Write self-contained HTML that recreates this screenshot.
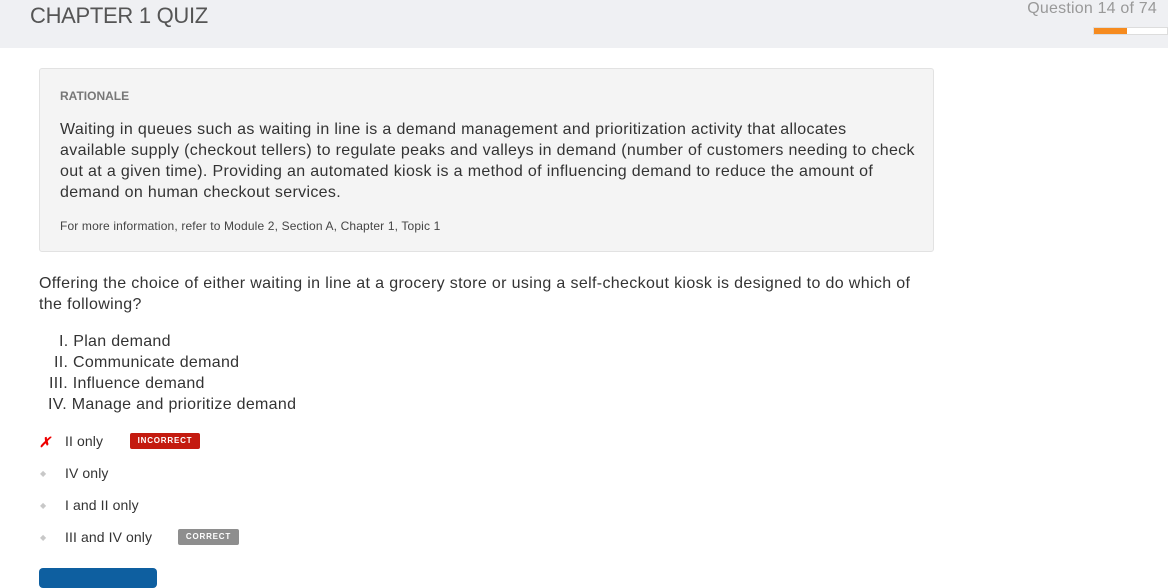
<!DOCTYPE html>
<html><head><meta charset="utf-8"><style>
body{margin:0;width:1168px;height:574px;overflow:hidden;background:#fff;font-family:"Liberation Sans",Arial,sans-serif;color:#333;}
.hdr{position:absolute;left:0;top:0;width:1168px;height:48px;background:#eff0f3;}
.title{position:absolute;left:30px;top:3px;font-size:22px;color:#555;letter-spacing:-0.3px}
.qn{position:absolute;right:11px;top:0;font-size:16px;color:#999;letter-spacing:0.2px}
.bar{position:absolute;left:1093px;top:27px;width:75px;height:8px;background:#fff;border:1px solid #ddd;box-sizing:border-box}
.bar div{width:33px;height:6px;background:#f68b1f}
.box{position:absolute;left:39px;top:68px;width:895px;height:184px;background:#f4f4f4;border:1px solid #e2e2e2;border-radius:3px;box-sizing:border-box}
.rat{position:absolute;left:20px;top:20px;font-size:12px;font-weight:bold;color:#777}
.rtxt{position:absolute;left:20px;top:50px;font-size:16px;line-height:21px;white-space:nowrap;letter-spacing:0.34px;color:#333}
.more{position:absolute;left:20px;top:150px;font-size:12px;color:#444;letter-spacing:0.15px}
.q{position:absolute;left:39px;top:273px;font-size:16px;line-height:21px;white-space:nowrap;letter-spacing:0.35px}
.list{position:absolute;top:331px;font-size:16px;line-height:21px;letter-spacing:0.3px}
.opt{position:absolute;left:65px;font-size:14px;color:#333;letter-spacing:0.1px}
.mk{position:absolute;left:40px;font-size:8px;color:#c8c8c8}
.badge{position:absolute;font-size:8px;font-weight:bold;color:#fff;letter-spacing:0.8px;text-align:center;line-height:16px;height:16px;border-radius:2px}
.btn{position:absolute;left:39px;top:568px;width:118px;height:20px;background:#0e5fa0;border-radius:4px}
</style></head><body>
<div class="hdr"><div class="title">CHAPTER 1 QUIZ</div><div class="qn">Question 14 of 74</div><div class="bar"><div></div></div></div>
<div class="box">
<div class="rat">RATIONALE</div>
<div class="rtxt">Waiting in queues such as waiting in line is a demand management and prioritization activity that allocates<br>available supply (checkout tellers) to regulate peaks and valleys in demand (number of customers needing to check<br>out at a given time). Providing an automated kiosk is a method of influencing demand to reduce the amount of<br>demand on human checkout services.</div>
<div class="more">For more information, refer to Module 2, Section A, Chapter 1, Topic 1</div>
</div>
<div class="q">Offering the choice of either waiting in line at a grocery store or using a self-checkout kiosk is designed to do which of<br>the following?</div>
<div class="list" style="left:59px">I. Plan demand</div>
<div class="list" style="left:54px;top:352px">II. Communicate demand</div>
<div class="list" style="left:49px;top:373px">III. Influence demand</div>
<div class="list" style="left:48px;top:394px">IV. Manage and prioritize demand</div>
<div class="mk" style="top:434px;left:39px;color:#e00;font-size:14px;font-style:italic;font-weight:bold">✗</div>
<div class="opt" style="top:433px">II only</div>
<div class="badge" style="left:130px;top:433px;width:70px;background:#c41a0f">INCORRECT</div>
<div class="mk" style="top:469px">◆</div><div class="opt" style="top:465px">IV only</div>
<div class="mk" style="top:501px">◆</div><div class="opt" style="top:497px">I and II only</div>
<div class="mk" style="top:533px">◆</div><div class="opt" style="top:529px">III and IV only</div>
<div class="badge" style="left:178px;top:529px;width:61px;background:#8e8e8e">CORRECT</div>
<div class="btn"></div>
</body></html>
